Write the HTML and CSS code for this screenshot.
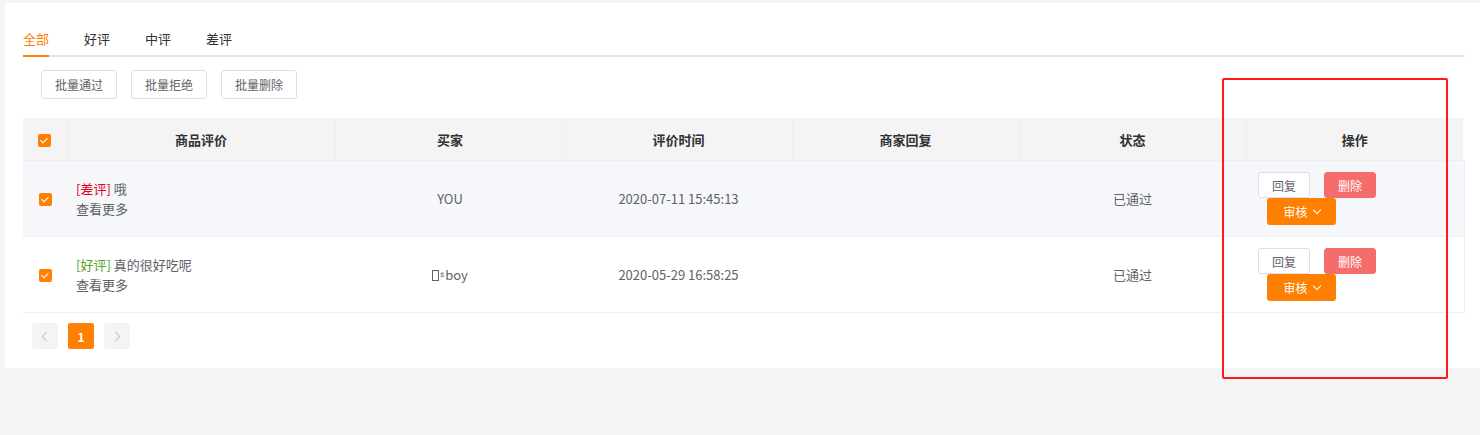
FILE: index.html
```html
<!DOCTYPE html>
<html lang="zh-CN">
<head>
    <meta charset="UTF-8">
    <meta name="viewport" content="width=device-width, initial-scale=1.0">
    <title>评价管理</title>
    <link rel="stylesheet" href="styles.css">
</head>
<body>

    <div class="card">

        <!-- Tabs -->
        <div class="tabs">
            <span class="tab active">全部</span>
            <span class="tab">好评</span>
            <span class="tab">中评</span>
            <span class="tab">差评</span>
        </div>

        <!-- Batch actions -->
        <div class="batch">
            <button class="btn">批量通过</button>
            <button class="btn">批量拒绝</button>
            <button class="btn">批量删除</button>
        </div>

        <!-- Comment table -->
        <table class="grid">
            <colgroup>
                <col style="width:44px">
                <col style="width:268px">
                <col style="width:230px">
                <col style="width:227px">
                <col style="width:227px">
                <col style="width:227px">
                <col>
            </colgroup>
            <thead>
                <tr>
                    <th><span class="check"></span></th>
                    <th>商品评价</th>
                    <th>买家</th>
                    <th>评价时间</th>
                    <th>商家回复</th>
                    <th>状态</th>
                    <th>操作</th>
                </tr>
            </thead>
            <tbody>
                <tr class="hover">
                    <td class="center"><span class="check"></span></td>
                    <td class="left">
                        <div><span class="bad">[差评]</span> 哦</div>
                        <div>查看更多</div>
                    </td>
                    <td>YOU</td>
                    <td>2020-07-11 15:45:13</td>
                    <td></td>
                    <td>已通过</td>
                    <td class="ops">
                        <div class="ops-line">
                            <button class="mini">回复</button>
                            <button class="mini danger">删除</button>
                        </div>
                        <button class="audit">审核 <span class="arrow"></span></button>
                    </td>
                </tr>
                <tr>
                    <td class="center"><span class="check"></span></td>
                    <td class="left">
                        <div><span class="good">[好评]</span> 真的很好吃呢</div>
                        <div>查看更多</div>
                    </td>
                    <td><span class="tofu"></span><span class="sup">ŝ</span>boy</td>
                    <td>2020-05-29 16:58:25</td>
                    <td></td>
                    <td>已通过</td>
                    <td class="ops">
                        <div class="ops-line">
                            <button class="mini">回复</button>
                            <button class="mini danger">删除</button>
                        </div>
                        <button class="audit">审核 <span class="arrow"></span></button>
                    </td>
                </tr>
            </tbody>
        </table>

        <!-- Pagination -->
        <div class="pager">
            <span class="page"><span class="chev left-chev"></span></span>
            <span class="page current">1</span>
            <span class="page"><span class="chev right-chev"></span></span>
        </div>

    </div>

    <!-- annotation box drawn over the operations column -->
    <div class="mark"></div>

</body>
</html>
```

FILE: styles.css
```css
body {
    margin: 0;
    padding: 3px 0 0 5px;
    background-color: #f5f5f5;
    font-family: "Noto Sans CJK SC", "Liberation Sans", sans-serif;
    font-size: 13px;
    color: #606266;
    position: relative;
    height: 432px;
    overflow: hidden;
}

.card {
    background-color: #fff;
    padding: 20px 15px 19px 18px;
    width: 1442px;
}

/* tabs */
.tabs {
    display: flex;
    border-bottom: 2px solid #e4e7ed;
    height: 32px;
}

.tab {
    line-height: 32px;
    margin-right: 35px;
    color: #303133;
    position: relative;
}

.tab.active {
    color: #ff8000;
}

.tab.active::after {
    content: "";
    position: absolute;
    left: 0;
    right: 0;
    bottom: -2px;
    height: 2px;
    background-color: #ff8000;
}

/* batch buttons */
.batch {
    display: flex;
    gap: 14px;
    padding-left: 18px;
    margin-top: 13px;
}

.btn {
    width: 76px;
    height: 29px;
    padding: 0;
    border: 1px solid #dcdfe6;
    border-radius: 3px;
    background-color: #fff;
    color: #606266;
    font-family: inherit;
    font-size: 12px;
}

/* table */
.grid {
    margin-top: 19px;
    width: 1442px;
    border-collapse: collapse;
    table-layout: fixed;
}

.grid th {
    height: 42px;
    padding: 0;
    background-color: #f4f4f4;
    color: #303133;
    font-weight: bold;
    border-right: 1px solid #ebeef5;
    border-bottom: 1px solid #ebeef5;
}

.grid th:last-child {
    border-right: 2px solid #fff;
}

.grid td {
    height: 53px;
    padding: 11px 10px;
    text-align: center;
    border-bottom: 1px solid #ebeef5;
    line-height: 20px;
}

.grid tr.hover td {
    background-color: #f5f7fa;
}

.grid td.center {
    padding: 0;
}

.grid td.left {
    text-align: left;
    padding-left: 9px;
}

.grid td:last-child {
    border-right: 1px solid #ebeef5;
}

.bad {
    color: #e4001b;
}

.good {
    color: #5c9e2a;
}

.check {
    display: inline-block;
    width: 13px;
    height: 13px;
    border-radius: 2px;
    background-color: #ff8000;
    position: relative;
    vertical-align: middle;
}

.check::after {
    content: "";
    position: absolute;
    left: 4px;
    top: 2px;
    width: 3px;
    height: 6px;
    border: 1px solid #fff;
    border-left: 0;
    border-top: 0;
    transform: rotate(45deg);
}

.tofu {
    display: inline-block;
    width: 5px;
    height: 9px;
    border: 1px solid #606266;
    vertical-align: -1px;
}

.sup {
    font-size: 8px;
    vertical-align: 3px;
    margin: 0 1px;
}

/* operations */
.grid td.ops {
    text-align: left;
    padding: 11px 12px;
    line-height: normal;
}

.ops-line {
    display: flex;
    gap: 14px;
}

.mini {
    width: 52px;
    height: 26px;
    padding: 0;
    border: 1px solid #dcdfe6;
    border-radius: 3px;
    background-color: #fff;
    color: #606266;
    font-family: inherit;
    font-size: 12px;
}

.mini.danger {
    background-color: #f56c6c;
    border-color: #f56c6c;
    color: #fff;
}

.audit {
    display: flex;
    align-items: center;
    justify-content: center;
    gap: 6px;
    width: 69px;
    height: 27px;
    margin-left: 9px;
    padding: 0;
    border: 0;
    border-radius: 3px;
    background-color: #ff8000;
    color: #fff;
    font-family: inherit;
    font-size: 12px;
}

.arrow {
    width: 5px;
    height: 5px;
    border-right: 1px solid #fff;
    border-bottom: 1px solid #fff;
    transform: rotate(45deg);
    margin-top: -4px;
}

/* pagination */
.pager {
    display: flex;
    gap: 10px;
    margin-top: 10px;
    padding-left: 9px;
}

.page {
    width: 26px;
    height: 26px;
    border-radius: 2px;
    background-color: #f4f4f5;
    display: flex;
    align-items: center;
    justify-content: center;
    font-size: 12px;
    font-weight: bold;
}

.page.current {
    background-color: #ff8000;
    color: #fff;
}

.chev {
    width: 6px;
    height: 6px;
    border-left: 1px solid #c0c4cc;
    border-bottom: 1px solid #c0c4cc;
}

.left-chev {
    transform: rotate(45deg);
    margin-left: 3px;
}

.right-chev {
    transform: rotate(-135deg);
    margin-right: 3px;
}

/* red annotation */
.mark {
    position: absolute;
    left: 1222px;
    top: 78px;
    width: 222px;
    height: 297px;
    border: 2px solid #ff1a1a;
    border-radius: 2px;
}
```
